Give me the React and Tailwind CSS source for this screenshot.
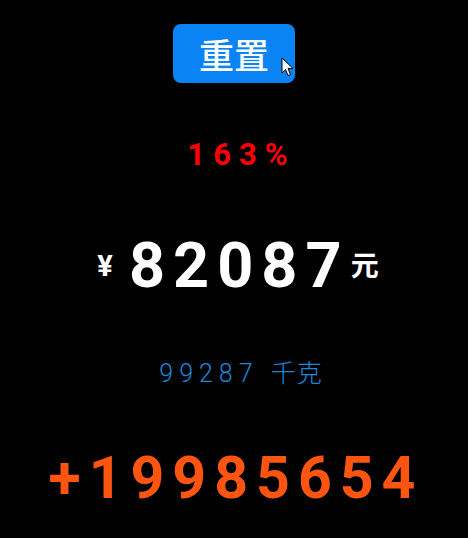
import { useState } from "react";

const font = { fontFamily: 'Roboto, "Noto Sans CJK SC", sans-serif' };

function Cursor() {
  return (
    <svg
      className="absolute left-[108px] top-[33px] h-[20px] w-[13px]"
      viewBox="0 0 13 20"
    >
      <path
        d="M1 1 L1 16 L4.5 12.5 L7 18.5 L9.5 17.5 L7 11.5 L12 11.5 Z"
        fill="#fff"
        stroke="#000"
        strokeWidth="1"
        strokeLinejoin="round"
      />
    </svg>
  );
}

export default function App() {
  const [count, setCount] = useState(0);

  return (
    <div
      className="flex min-h-[538px] w-full flex-col items-center bg-black"
      style={font}
    >
      <div className="relative mt-[24px]">
        <button
          type="button"
          onClick={() => setCount(count + 1)}
          className="flex h-[59px] w-[122px] items-center justify-center rounded-[8px] bg-[#0a84f4] text-[35px] font-medium leading-none text-white"
          style={{ fontFamily: '"Noto Sans CJK SC", sans-serif' }}
        >
          重置
        </button>
        <Cursor />
      </div>

      <p className="mt-[52px] pl-[15px] text-[31px] font-bold leading-[40px] tracking-[8px] text-[#ff0000]">
        163%
      </p>

      <div className="mt-[59px] flex items-end pl-[8px] leading-none text-white">
        <span className="mb-[16px] mr-[16px] text-[29px] font-bold">¥</span>
        <span className="text-[63px] font-bold tracking-[8px]">82087</span>
        <span className="mb-[16px] ml-[1px] text-[28px] font-bold">元</span>
      </div>

      <p className="mt-[64px] pl-[14px] text-[25px] font-light leading-none text-[#1c86db]">
        <span className="tracking-[6px]">99287 </span>
        <span className="tracking-[1px]">千克</span>
      </p>

      <p className="mt-[62px] pl-[4px] text-[59px] font-bold leading-none tracking-[8px] text-[#ff5511]">
        +19985654
      </p>
    </div>
  );
}
